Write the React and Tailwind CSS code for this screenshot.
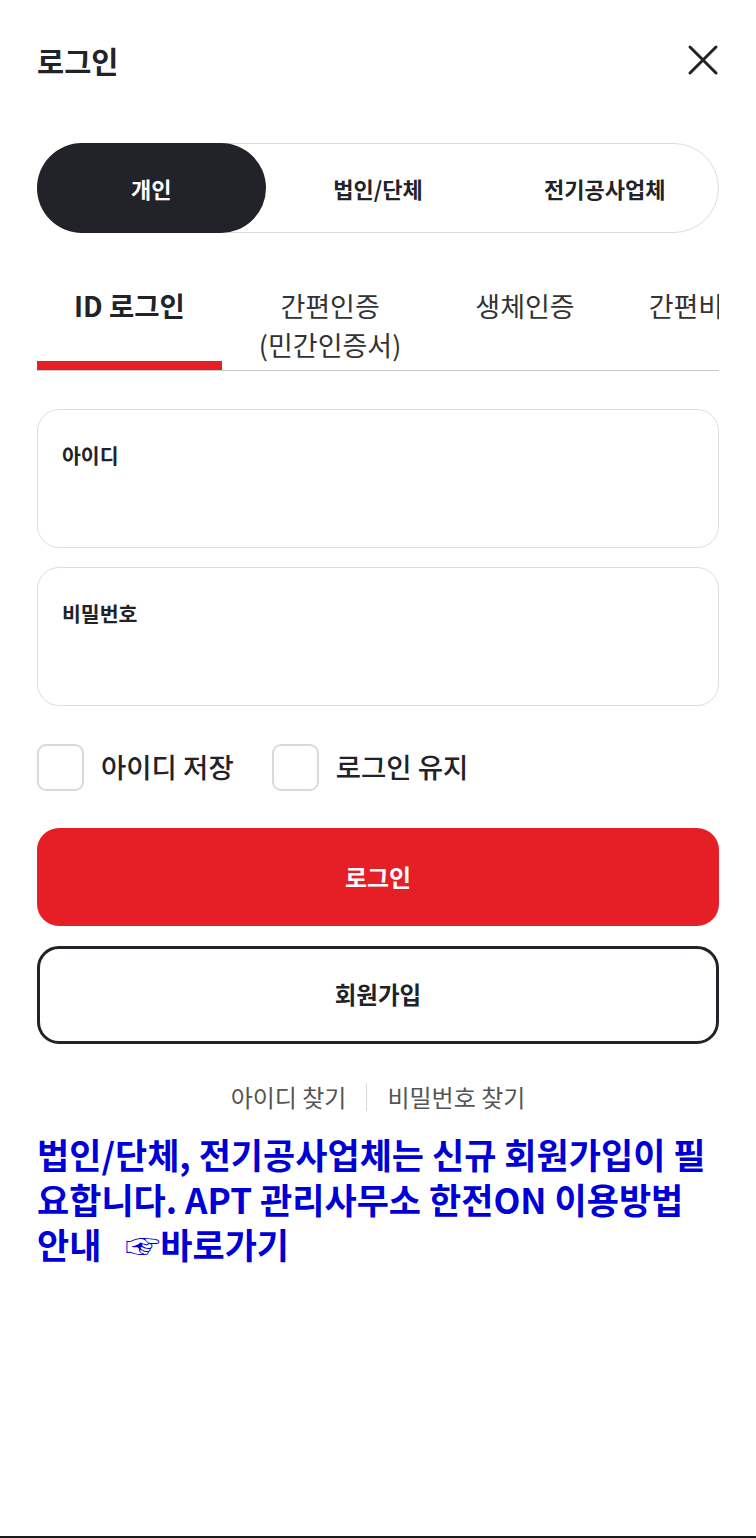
import React from "react";

const font = { fontFamily: '"Noto Sans CJK KR", "Noto Sans", sans-serif' };

export default function App() {
  return (
    <div className="min-h-[1538px] flex flex-col bg-white text-[#222328]" style={font}>
      <div className="px-[37px]">
        {/* Header */}
        <div className="flex items-center justify-between h-[40px] mt-[40px]">
          <h1 className="text-[29.5px] leading-[40px] font-bold">로그인</h1>
          <svg width="32" height="32" viewBox="0 0 32 32" className="mr-[0px]">
            <path d="M3 3 L29 29 M29 3 L3 29" stroke="#222328" strokeWidth="3" strokeLinecap="round" fill="none" />
          </svg>
        </div>

        {/* Segmented control */}
        <div className="mt-[63px] h-[90px] rounded-full border border-[#dcdcdc] grid grid-cols-3">
          <div className="rounded-full bg-[#222328] text-white flex items-center justify-center text-[22px] font-bold -m-px">개인</div>
          <div className="flex items-center justify-center text-[22px] font-bold">법인/단체</div>
          <div className="flex items-center justify-center text-[22px] font-bold">전기공사업체</div>
        </div>

        {/* Tabs */}
        <div className="mt-[53px] flex overflow-hidden border-b border-[#c8c8c8] h-[85px]">
          <div className="relative flex-none px-[37px] text-center text-[27.5px] leading-[39px] font-bold whitespace-nowrap">
            ID 로그인
            <div className="absolute left-0 right-0 bottom-[-1px] h-[10px] bg-[#e61e25]" />
          </div>
          <div className="flex-none px-[37px] text-center text-[27px] leading-[39px] text-[#333] whitespace-nowrap">
            간편인증
            <br />
            (민간인증서)
          </div>
          <div className="flex-none px-[37px] text-center text-[27px] leading-[39px] text-[#333] whitespace-nowrap">생체인증</div>
          <div className="flex-none px-[37px] text-center text-[27px] leading-[39px] text-[#333] whitespace-nowrap">간편비밀번호</div>
        </div>

        {/* Inputs */}
        <div className="mt-[38px] flex flex-col gap-[19px]">
          <div className="h-[139px] rounded-[22px] border border-[#dcdee0] px-[24px] pt-[31px]">
            <div className="text-[20.5px] leading-[28px] font-bold">아이디</div>
          </div>
          <div className="h-[139px] rounded-[22px] border border-[#dcdee0] px-[24px] pt-[31px]">
            <div className="text-[20.5px] leading-[28px] font-bold">비밀번호</div>
          </div>
        </div>

        {/* Checkboxes */}
        <div className="mt-[38px] flex items-center">
          <div className="flex items-center">
            <div className="w-[47px] h-[47px] rounded-[9px] border-2 border-[#d6dbe1]" />
            <span className="ml-[17px] text-[27.5px] leading-[36px] font-medium -mt-[3px]">아이디 저장</span>
          </div>
          <div className="flex items-center ml-[38px]">
            <div className="w-[47px] h-[47px] rounded-[9px] border-2 border-[#d6dbe1]" />
            <span className="ml-[17px] text-[27.5px] leading-[36px] font-medium -mt-[3px]">로그인 유지</span>
          </div>
        </div>

        {/* Buttons */}
        <div className="mt-[37px] h-[98px] rounded-[22px] bg-[#e61e25] flex items-center justify-center text-white text-[24px] font-bold">
          로그인
        </div>
        <div className="mt-[20px] h-[98px] rounded-[22px] border-[3px] border-[#222328] flex items-center justify-center text-[23.5px] font-bold">
          회원가입
        </div>

        {/* Links */}
        <div className="mt-[38px] flex items-center justify-center text-[24px] leading-[30px] text-[#555]">
          <span>아이디 찾기</span>
          <span className="mx-[20px] w-px h-[28px] bg-[#d8d8d8]" />
          <span>비밀번호 찾기</span>
        </div>

        {/* Notice */}
        <p className="mt-[19px] text-[35px] leading-[45px] font-bold text-[#0000d6]">
          법인/단체, 전기공사업체는 신규 회원가입이 필요합니다. APT 관리사무소 한전ON 이용방법 안내 &nbsp;&nbsp;☞바로가기
        </p>
      </div>
      <div className="mt-auto h-[2px] bg-[#1a1a1a]" />
    </div>
  );
}
